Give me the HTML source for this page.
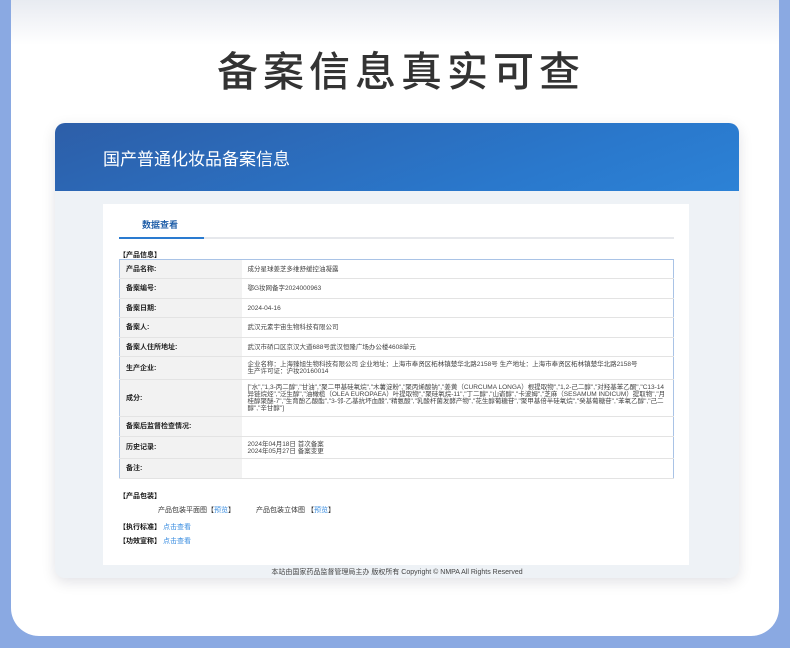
<!DOCTYPE html>
<html><head><meta charset="utf-8"><style>
*{margin:0;padding:0;box-sizing:border-box}
body{width:790px;height:648px;background:#8aa9e2;font-family:"Liberation Sans","Noto Sans CJK SC",sans-serif;position:relative;overflow:hidden}
.panel{position:absolute;left:11px;top:0;width:768px;height:636px;background:linear-gradient(#e8ebf1 0,#fff 45px);border-radius:0 0 28px 28px}
.h1{position:absolute;top:38px;left:6px;width:790px;text-align:center;font-size:41px;font-weight:500;color:#333;letter-spacing:5px;font-family:"Noto Sans CJK SC",sans-serif}
.card{position:absolute;left:55px;top:123px;width:684px;height:455px;background:#eef2f6;border-radius:10px;box-shadow:0 4px 14px rgba(0,0,40,.12);overflow:hidden}
.hd{height:68px;background:linear-gradient(160deg,#2d5ea8,#2a78cc 70%,#2c82d6);position:relative}
.hd span{position:absolute;left:48px;top:22px;color:#fff;font-size:17px;font-family:"Noto Sans CJK SC",sans-serif}
.inner{position:absolute;left:48px;top:81px;width:586px;height:361px;background:#fff}
.tab{position:absolute;left:39px;top:14px;font-size:9px;color:#1f5ea8;font-weight:bold}
.line{position:absolute;left:16px;top:33px;width:555px;height:2px;background:#e6e8ec}
.line b{position:absolute;left:0;top:0;width:85px;height:2px;background:#2a7bd0}
.sec{position:absolute;left:16px;font-size:7px;font-weight:bold;color:#111}
table{position:absolute;left:16px;top:55px;width:555px;border-collapse:collapse;border:1px solid #a9c3e6;font-size:6.5px;color:#444}
td{border-bottom:1px solid #e3e3e3;padding:0 6px;line-height:7px}
td.l{width:122px;background:#f2f2f2;font-weight:bold;color:#222;font-size:7px}
.sm{position:absolute;font-size:7px;color:#333}
.a{color:#3b8ee0}
.ft{position:absolute;top:444px;left:0;width:684px;text-align:center;font-size:7px;color:#444}
</style></head><body>
<div class="panel"></div>
<div class="h1">备案信息真实可查</div>
<div class="card">
<div class="hd"><span>国产普通化妆品备案信息</span></div>
<div class="inner">
<div class="tab">数据查看</div>
<div class="line"><b></b></div>
<div class="sec" style="top:46px">【产品信息】</div>
<table>
<tr style="height:19px"><td class="l">产品名称:</td><td>成分星球姜芝多维舒缓控油凝露</td></tr>
<tr style="height:20px"><td class="l">备案编号:</td><td>鄂G妆网备字2024000963</td></tr>
<tr style="height:19px"><td class="l">备案日期:</td><td>2024-04-16</td></tr>
<tr style="height:20px"><td class="l">备案人:</td><td>武汉元素宇宙生物科技有限公司</td></tr>
<tr style="height:19px"><td class="l">备案人住所地址:</td><td>武汉市硚口区京汉大道688号武汉恒隆广场办公楼4608单元</td></tr>
<tr style="height:23px"><td class="l">生产企业:</td><td style="white-space:nowrap">企业名称：上海臻旭生物科技有限公司 企业地址：上海市奉贤区柘林镇楚华北路2158号 生产地址：上海市奉贤区柘林镇楚华北路2158号<br>生产许可证：沪妆20160014</td></tr>
<tr style="height:37px"><td class="l">成分:</td><td>["水","1,3-丙二醇","甘油","聚二甲基硅氧烷","木薯淀粉","聚丙烯酸钠","姜黄（CURCUMA LONGA）根提取物","1,2-己二醇","对羟基苯乙酮","C13-14 异链烷烃","泛生醇","油橄榄（OLEA EUROPAEA）叶提取物","聚硅氧烷-11","丁二醇","山嵛醇","卡波姆","芝麻（SESAMUM INDICUM）提取物","月桂醇聚醚-7","生育酚乙酸酯","3-邻-乙基抗坏血酸","精氨酸","乳酸杆菌发酵产物","花生醇葡糖苷","聚甲基倍半硅氧烷","癸基葡糖苷","苯氧乙醇","己二醇","辛甘醇"]</td></tr>
<tr style="height:20px"><td class="l">备案后监督检查情况:</td><td></td></tr>
<tr style="height:22px"><td class="l">历史记录:</td><td>2024年04月18日 首次备案<br>2024年05月27日 备案变更</td></tr>
<tr style="height:20px"><td class="l">备注:</td><td></td></tr>
</table>
<div class="sec" style="top:287px">【产品包装】</div>
<div class="sm" style="left:55px;top:301px">产品包装平面图【<span class="a">预览</span>】</div>
<div class="sm" style="left:153px;top:301px">产品包装立体图 【<span class="a">预览</span>】</div>
<div class="sec" style="top:318px">【执行标准】 <span class="a" style="font-weight:normal">点击查看</span></div>
<div class="sec" style="top:332px">【功效宣称】 <span class="a" style="font-weight:normal">点击查看</span></div>
</div>
<div class="ft">本站由国家药品监督管理局主办 版权所有 Copyright © NMPA All Rights Reserved</div>
</div>
</body></html>
